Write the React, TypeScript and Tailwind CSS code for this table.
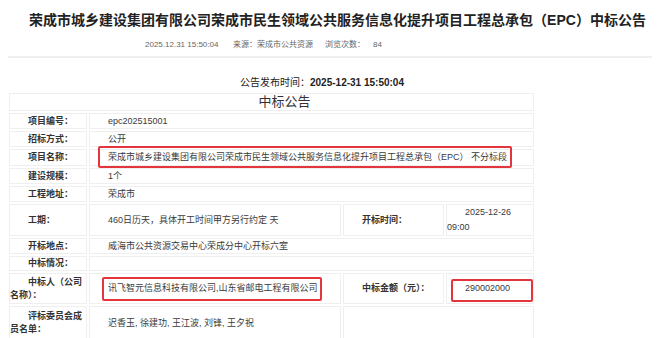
import React from "react";

const font = "font-['Liberation_Sans','Noto_Sans_CJK_SC',sans-serif]";
const cell = "border border-[#efefef] align-middle indent-[18px] text-[9px] leading-[13px] p-0";
const label = `${cell} font-bold text-[#333]`;
const value = `${cell} text-[#3a3a3a]`;

function RedBox({ cls }: { cls: string }) {
  return <div className={`pointer-events-none absolute rounded-[2px] border-2 border-[#e3353b] ${cls}`} />;
}

export default function App() {
  return (
    <div className={`w-[660px] h-[338px] overflow-hidden bg-white ${font}`}>
      <h1 className="pt-[11px] pl-[15px] text-center text-[14px] font-bold leading-[18px] text-[#222]">
        荣成市城乡建设集团有限公司荣成市民生领域公共服务信息化提升项目工程总承包（EPC）中标公告
      </h1>
      <div className="mt-[11px] flex pl-[145px] text-[8px] leading-[10px] text-[#666]">
        <span className="w-[88px]">2025.12.31 15:50:04</span>
        <span className="w-[92px]">来源：荣成市公共资源</span>
        <span className="w-[48px]">浏览次数：</span>
        <span>84</span>
      </div>
      <div className="mx-[8px] mt-[6px] h-[2px] w-[644px] bg-[#efefef]" />
      <div className="mt-[19px] pl-[240px] text-[10px] leading-[12px] text-[#222]">
        公告发布时间：<span className="font-bold">2025-12-31 15:50:04</span>
      </div>
      <table className="ml-[7px] mt-[2px] w-[529px] table-fixed border-separate border-spacing-[2px]">
        <colgroup>
          <col className="w-[78px]" />
          <col className="w-[252px]" />
          <col className="w-[101px]" />
          <col className="w-[88px]" />
        </colgroup>
        <tbody>
          <tr>
            <td colSpan={4} className="h-[16px] border border-[#efefef] p-0 text-center indent-[26px] text-[13px] leading-[16px] text-[#333]">
              中标公告
            </td>
          </tr>
          <tr>
            <td className={`${label} h-[16px]`}>项目编号：</td>
            <td colSpan={3} className={value}>epc202515001</td>
          </tr>
          <tr>
            <td className={`${label} h-[16px]`}>招标方式：</td>
            <td colSpan={3} className={value}>公开</td>
          </tr>
          <tr>
            <td className={`${label} h-[17px]`}>项目名称：</td>
            <td colSpan={3} className={`${value} relative`}>
              荣成市城乡建设集团有限公司荣成市民生领域公共服务信息化提升项目工程总承包（EPC） 不分标段
              <RedBox cls="left-[8px] right-[21px] -top-[4px] -bottom-[3px]" />
            </td>
          </tr>
          <tr>
            <td className={`${label} h-[16px]`}>建设规模：</td>
            <td colSpan={3} className={value}>1个</td>
          </tr>
          <tr>
            <td className={`${label} h-[16px]`}>工程地址：</td>
            <td colSpan={3} className={value}>荣成市</td>
          </tr>
          <tr>
            <td className={`${label} h-[30px]`}>工期：</td>
            <td className={value}>460日历天，具体开工时间甲方另行约定 天</td>
            <td className={label}>开标时间：</td>
            <td className={`${value} leading-[15px]`}>2025-12-26 09:00</td>
          </tr>
          <tr>
            <td className={`${label} h-[16px]`}>开标地点：</td>
            <td colSpan={3} className={value}>威海市公共资源交易中心荣成分中心开标六室</td>
          </tr>
          <tr>
            <td className={`${label} h-[15px]`}>中标情况：</td>
            <td colSpan={3} className={value}></td>
          </tr>
          <tr>
            <td className={`${label} h-[31px]`}>中标人（公司名称）：</td>
            <td className={`${value} relative`}>
              讯飞智元信息科技有限公司,山东省邮电工程有限公司
              <RedBox cls="left-[12px] right-[18px] top-[3px] bottom-[2px]" />
            </td>
            <td className={label}>中标金额（元）：</td>
            <td className={`${value} relative`}>
              290002000
              <RedBox cls="left-[4px] right-0 top-[5px] bottom-[1px]" />
            </td>
          </tr>
          <tr>
            <td className={`${label} h-[34px]`}>评标委员会成员名单：</td>
            <td className={value}>迟香玉, 徐建功, 王江波, 刘锋, 王夕祝</td>
            <td colSpan={2} className={value}></td>
          </tr>
        </tbody>
      </table>
    </div>
  );
}
